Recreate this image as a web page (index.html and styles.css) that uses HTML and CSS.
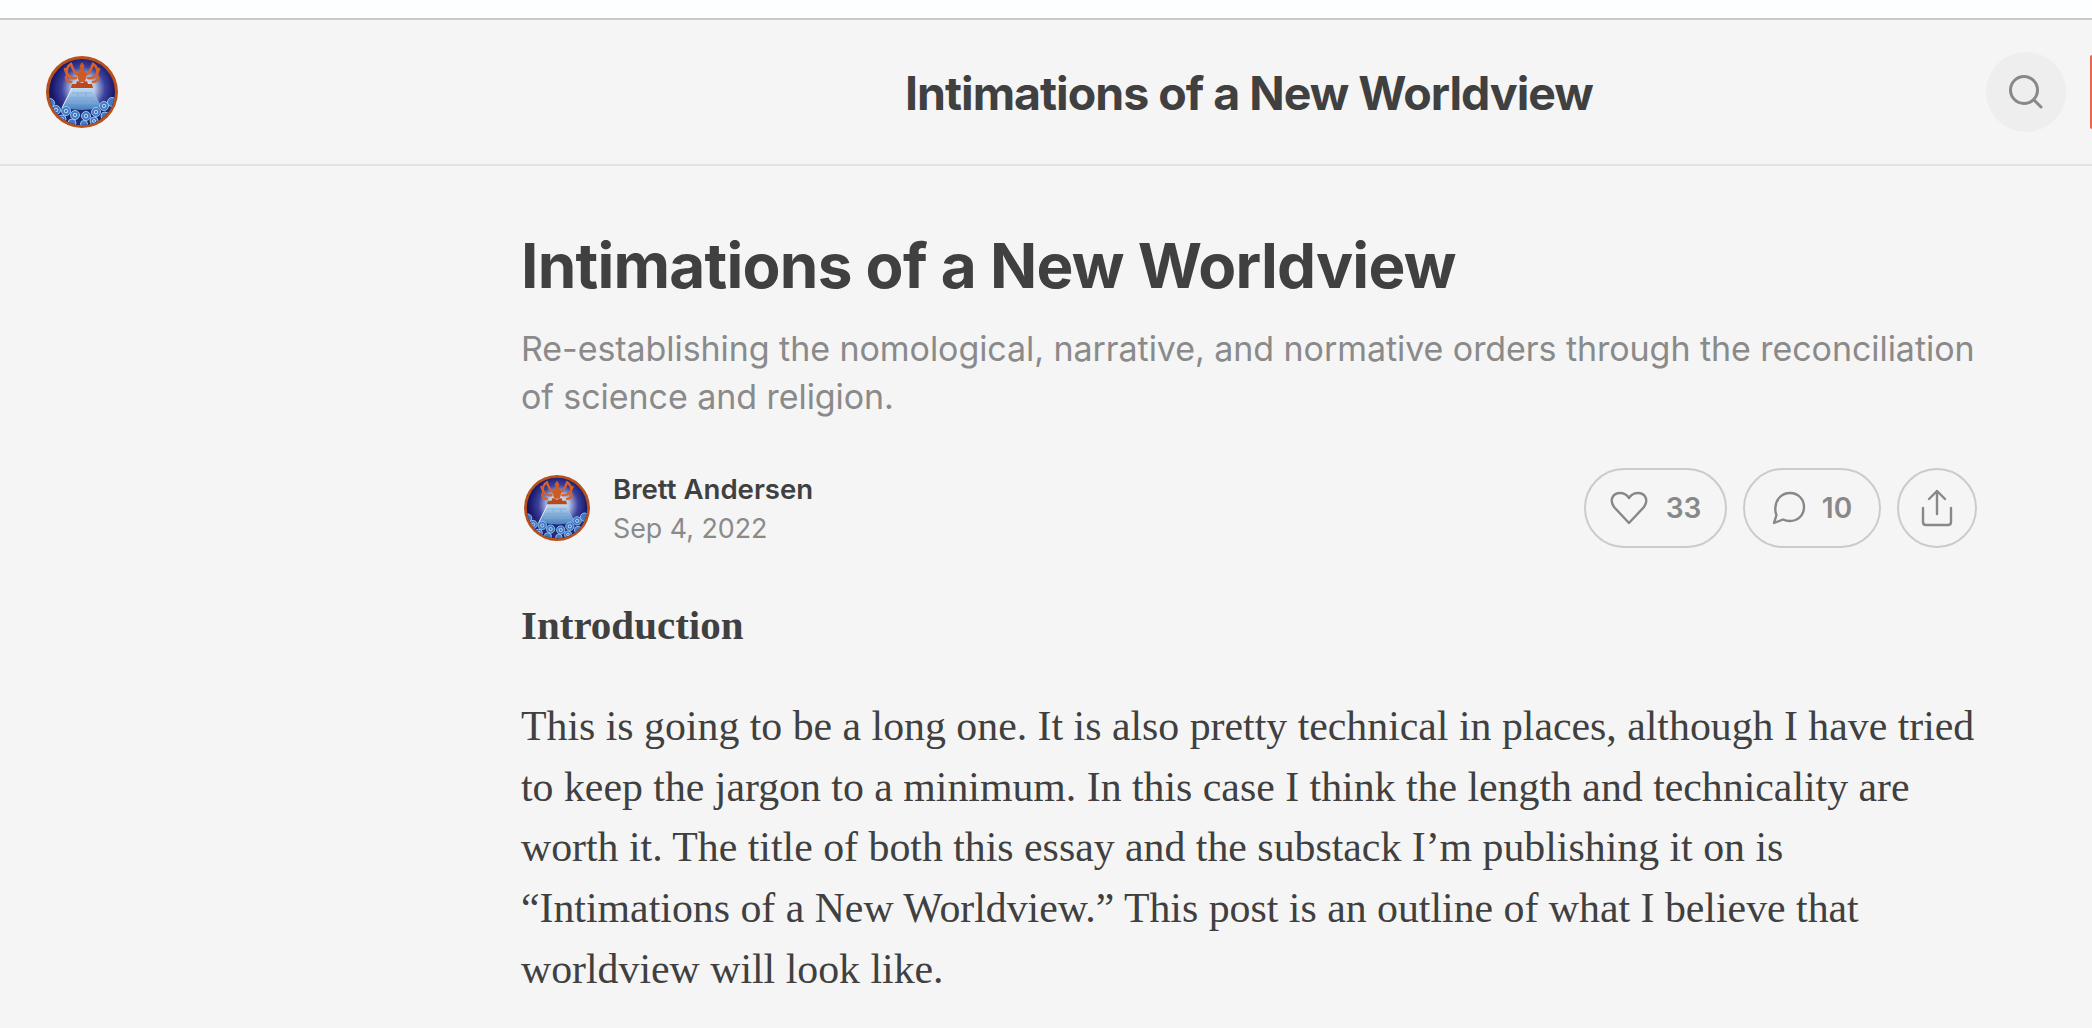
FILE: index.html
```html
<!DOCTYPE html>
<html lang="en">
<head>
    <meta charset="UTF-8">
    <meta name="viewport" content="width=device-width, initial-scale=1.0">
    <title>Intimations of a New Worldview</title>
    <link rel="stylesheet" href="styles.css">
</head>
<body>
    <svg class="defs" width="0" height="0" aria-hidden="true">
        <defs>
            <radialGradient id="sky" cx="52%" cy="45%" r="52%">
                <stop offset="0" stop-color="#eef2fa"/>
                <stop offset="0.3" stop-color="#b9c8e6"/>
                <stop offset="0.58" stop-color="#3c419c"/>
                <stop offset="0.85" stop-color="#171667"/>
                <stop offset="1" stop-color="#14135c"/>
            </radialGradient>
            <linearGradient id="pyramid" x1="0" y1="0" x2="0" y2="1">
                <stop offset="0" stop-color="#c3dcf2"/>
                <stop offset="1" stop-color="#3d78bd"/>
            </linearGradient>
            <clipPath id="inner"><circle cx="36" cy="36" r="33"/></clipPath>
            <symbol id="logo" viewBox="0 0 72 72">
                <circle cx="36" cy="36" r="36" fill="#b8501c"/>
                <g clip-path="url(#inner)">
                    <rect width="72" height="72" fill="url(#sky)"/>
                    <path d="M26 32H46L58 56H14Z" fill="url(#pyramid)"/>
                    <path d="M26 32L15 54" stroke="#eef4fb" stroke-width="1" fill="none"/>
                    <path d="M26 37H46M24 42H48M22 47H50M32 37V42M40 37V42M29 42V47M43 42V47M36 42V47" stroke="#7fa9d6" stroke-width="0.8" fill="none"/>
                    <g fill="none" stroke="#d4622a" stroke-width="2.600" stroke-linecap="round">
                        <path d="M33 19C29 18 27 14 25 8C21 10 20 15 21 19"/>
                        <path d="M39 19C43 18 45 14 47 8C51 10 52 15 51 19"/>
                        <path d="M30 22C25 23 22 21 19 13M20 21C20 24 22 26 25 26"/>
                        <path d="M42 22C47 23 50 21 53 13M52 21C52 24 50 26 47 26"/>
                    </g>
                    <path d="M36 6L38.500 10L37.500 14L41 18L39 26H33L31 18L34.500 14L33.500 10Z" fill="#cf5a24"/>
                    <path d="M25 32L26 28L30 28L31 25L36 27L41 25L42 28L46 28L47 32Z" fill="#b9481a"/>
                    <path d="M0 42C6 42 11 47 14 52L24 53L36 54L48 53L58 50C62 45 67 42 72 41V72H0Z" fill="#1c2a78"/>
                    <g fill="#3f78c6" stroke="#a9cdf0" stroke-width="0.9">
                        <circle cx="4" cy="47" r="4.500"/>
                        <circle cx="10" cy="54" r="4.500"/>
                        <circle cx="20" cy="55" r="4.500"/>
                        <circle cx="29" cy="59" r="4.500"/>
                        <circle cx="40" cy="60" r="4.500"/>
                        <circle cx="50" cy="56" r="4.500"/>
                        <circle cx="58" cy="50" r="4.500"/>
                        <circle cx="66" cy="46" r="4.500"/>
                        <circle cx="16" cy="63" r="4"/>
                        <circle cx="26" cy="67" r="4"/>
                        <circle cx="38" cy="68" r="3.500"/>
                        <circle cx="48" cy="65" r="4"/>
                        <circle cx="59" cy="60" r="4"/>
                    </g>
                    <g fill="none" stroke="#e4f0fb" stroke-width="0.8">
                        <circle cx="10" cy="54" r="1.800"/>
                        <circle cx="20" cy="55" r="1.800"/>
                        <circle cx="29" cy="59" r="1.800"/>
                        <circle cx="40" cy="60" r="1.800"/>
                        <circle cx="50" cy="56" r="1.800"/>
                        <circle cx="58" cy="50" r="1.800"/>
                        <circle cx="16" cy="63" r="1.500"/>
                        <circle cx="48" cy="65" r="1.500"/>
                    </g>
                </g>
            </symbol>
        </defs>
    </svg>

    <div class="page">
        <div class="top-strip"></div>
        <header class="site-header">
            <div class="header-left">
                <svg class="logo" viewBox="0 0 72 72"><use href="#logo"/></svg>
            </div>
            <div class="site-title">Intimations of a New Worldview</div>
            <div class="header-right">
                <button class="search-btn" aria-label="Search">
                    <svg viewBox="0 0 36 36" width="36" height="36" fill="none" stroke="#888" stroke-width="3" stroke-linecap="round">
                        <circle cx="16" cy="16" r="13.5"/>
                        <path d="M26 26L33 33"/>
                    </svg>
                </button>
                <div class="subscribe-btn"></div>
            </div>
        </header>

        <main class="post">
            <h1 class="post-title">Intimations of a New Worldview</h1>
            <h3 class="post-subtitle">Re-establishing the nomological, narrative, and normative orders through the reconciliation of science and religion.</h3>

            <div class="post-meta">
                <svg class="avatar" viewBox="0 0 72 72"><use href="#logo"/></svg>
                <div class="byline">
                    <div class="author">Brett Andersen</div>
                    <div class="date">Sep 4, 2022</div>
                </div>
                <div class="actions">
                    <div class="pill pill-like">
                        <svg viewBox="0 0 38 34" width="38" height="34" fill="none" stroke="#888" stroke-width="2.4" stroke-linejoin="round">
                            <path d="M19 32L4 16C-1 9 3 2 10 2C14 2 17 4 19 7C21 4 24 2 28 2C35 2 39 9 34 16Z"/>
                        </svg>
                        <span>33</span>
                    </div>
                    <div class="pill pill-comment">
                        <svg viewBox="0 0 34 34" width="34" height="34" fill="none" stroke="#888" stroke-width="2.4" stroke-linejoin="round">
                            <path d="M18 2C26 2 32 8 32 16C32 24 26 30 18 30C15 30 13 29.500 11 28.500L2 32L4.500 24C3.500 22 3 19 3.500 16C4 8 10 2 18 2Z"/>
                        </svg>
                        <span>10</span>
                    </div>
                    <div class="pill pill-share">
                        <svg viewBox="0 0 32 38" width="32" height="38" fill="none" stroke="#888" stroke-width="2.4" stroke-linecap="round" stroke-linejoin="round">
                            <path d="M16 25V2M8 10L16 2L24 10"/>
                            <path d="M2 19V33C2 35 3 36 5 36H27C29 36 30 35 30 33V19"/>
                        </svg>
                    </div>
                </div>
            </div>

            <div class="post-body">
                <p class="intro-head">Introduction</p>
                <p>This is going to be a long one. It is also pretty technical in places, although I have tried to keep the jargon to a minimum. In this case I think the length and technicality are worth it. The title of both this essay and the substack I’m publishing it on is “Intimations of a New Worldview.” This post is an outline of what I believe that worldview will look like.</p>
            </div>
        </main>
    </div>
</body>
</html>
```

FILE: styles.css
```css
/* Global Styles */
body {
    margin: 0;
    padding: 0;
    overflow: hidden;
    height: 1028px;
    background-color: #f5f5f5;
    color: #404040;
    font-family: Inter, "Liberation Sans", sans-serif;
}

.defs {
    display: block;
    height: 0;
}

.top-strip {
    height: 18px;
    background-color: #fdfeff;
    border-bottom: 2px solid #c9cacd;
}

.site-header {
    display: grid;
    grid-template-columns: 905px auto 1fr;
    align-items: center;
    height: 144px;
    border-bottom: 2px solid #e2e2e2;
}

.header-left {
    display: flex;
    padding-left: 46px;
}

.logo {
    width: 72px;
    height: 72px;
    display: block;
}

.site-title {
    padding-top: 2px;
    font-size: 46.5px;
    font-weight: 700;
    letter-spacing: -1px;
}

.header-right {
    display: flex;
    justify-content: flex-end;
    align-items: center;
    gap: 24px;
}

.search-btn {
    width: 80px;
    height: 80px;
    padding: 0;
    border: none;
    border-radius: 50%;
    background-color: #eeeeee;
    display: flex;
    align-items: center;
    justify-content: center;
}

/* only the left edge of the button is on screen */
.subscribe-btn {
    width: 2px;
    height: 74px;
    border-radius: 3px 0 0 3px;
    background-color: #e8674a;
}

.post {
    width: 1456px;
    margin-left: 521px;
    padding-top: 64px;
}

.post-title {
    margin: 0;
    font-size: 62px;
    line-height: 72px;
    font-weight: 700;
    letter-spacing: -0.75px;
}

.post-subtitle {
    margin: 23px 0 0;
    font-size: 34px;
    line-height: 48px;
    font-weight: 400;
    letter-spacing: -0.06px;
    color: #8a8a8a;
}

.post-meta {
    display: flex;
    align-items: center;
    margin-top: 47px;
    height: 80px;
}

.avatar {
    width: 66px;
    height: 66px;
    margin-left: 3px;
    display: block;
}

.byline {
    margin-left: 23px;
    padding-top: 2px;
    font-size: 27.6px;
    line-height: 39px;
}

.author {
    font-weight: 600;
}

.date {
    font-size: 26.8px;
    color: #8a8a8a;
}

.actions {
    display: flex;
    gap: 16px;
    margin-left: auto;
}

.pill {
    box-sizing: border-box;
    height: 80px;
    display: flex;
    align-items: center;
    justify-content: center;
    gap: 18px;
    border: 2px solid #cbcbcb;
    border-radius: 40px;
    font-size: 28px;
    font-weight: 600;
    color: #888888;
}

.pill-like {
    width: 143px;
}

.pill-comment {
    width: 138px;
    gap: 16px;
}

.pill-share {
    width: 80px;
}

.post-body {
    margin-top: 47px;
    font-family: "Liberation Serif", serif;
    font-size: 41.8px;
    line-height: 60.8px;
}

.post-body p {
    margin: 0;
}

.post-body .intro-head {
    margin-bottom: 40px;
    font-size: 41px;
    font-weight: 700;
}
```
